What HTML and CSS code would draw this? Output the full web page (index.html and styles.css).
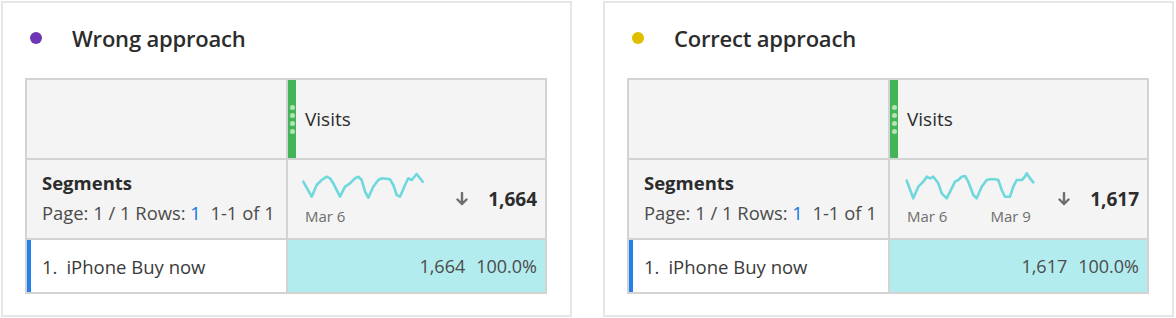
FILE: index.html
```html
<!DOCTYPE html>
<html>
<head>
<meta charset="utf-8">
<link rel="stylesheet" href="styles.css">
</head>
<body>
<div class="page">
  <section class="card">
    <div class="title-row">
      <span class="dot dot-purple"></span>
      <h2 class="title">Wrong approach</h2>
    </div>
    <div class="table">
      <div class="cell head-left"></div>
      <div class="cell head-right">
        <span class="grip"><i></i><i></i><i></i><i></i></span>
        <span class="metric">Visits</span>
      </div>
      <div class="cell seg-left">
        <div class="seg-title">Segments</div>
        <div class="seg-meta">Page: 1 / 1 Rows: <span class="blue">1</span>&nbsp; 1-1 of 1</div>
      </div>
      <div class="cell seg-right">
        <div class="spark">
          <svg width="126" height="32" viewBox="0 0 126 32">
            <polyline points="3.3,11.7 11.7,26.7 16.7,15 21.7,10 26.7,6.7 30,8.3 33.3,13.3 40,26.7 45,16.7 50,13.3 55,8.3 58.3,6.7 61.7,10 65,21.7 68.3,27.7 73.3,16.7 78.3,10 81.7,8.3 90,9.3 93.3,15 96.7,25 100,26.7 105,15 108.3,8.3 111.7,10 116.7,4 120,8.3 122.7,11.7"/>
          </svg>
          <div class="dates"><span>Mar 6</span></div>
        </div>
        <div class="total">
          <svg class="arrow" width="12" height="14" viewBox="0 0 12 14"><path d="M6 1 V12 M1.5 7.5 L6 12 L10.5 7.5"/></svg>
          <span class="num">1,664</span>
        </div>
      </div>
      <div class="cell row-left"><span class="idx">1.</span>iPhone Buy now</div>
      <div class="cell row-right"><span>1,664</span><span>100.0%</span></div>
    </div>
  </section>
  <section class="card">
    <div class="title-row">
      <span class="dot dot-yellow"></span>
      <h2 class="title">Correct approach</h2>
    </div>
    <div class="table">
      <div class="cell head-left"></div>
      <div class="cell head-right">
        <span class="grip"><i></i><i></i><i></i><i></i></span>
        <span class="metric">Visits</span>
      </div>
      <div class="cell seg-left">
        <div class="seg-title">Segments</div>
        <div class="seg-meta">Page: 1 / 1 Rows: <span class="blue">1</span>&nbsp; 1-1 of 1</div>
      </div>
      <div class="cell seg-right">
        <div class="spark">
          <svg width="136" height="32" viewBox="0 0 136 32">
            <polyline points="4.7,10.7 11.3,28.3 16.3,16.7 21.3,11.7 24.7,6.7 28,8.3 31.3,6.7 36.3,13.3 39.7,23.3 44.7,28.3 49.7,18.3 53,11.7 56.3,10 59.7,6.7 63,6 66.3,11.7 71.3,25 74.7,28.3 79.7,16.7 84.7,10 88,9.3 93,9.3 96.3,10 99.7,20 103,26.7 108,26.7 111.3,16.7 114.7,10 119.7,10 123,6.7 124.7,3.3 128,8.3 131.3,12.3"/>
          </svg>
          <div class="dates"><span>Mar 6</span><span>Mar 9</span></div>
        </div>
        <div class="total">
          <svg class="arrow" width="12" height="14" viewBox="0 0 12 14"><path d="M6 1 V12 M1.5 7.5 L6 12 L10.5 7.5"/></svg>
          <span class="num">1,617</span>
        </div>
      </div>
      <div class="cell row-left"><span class="idx">1.</span>iPhone Buy now</div>
      <div class="cell row-right"><span>1,617</span><span>100.0%</span></div>
    </div>
  </section>
</div>
</body>
</html>
```
FILE: styles.css
```css
* { box-sizing: border-box; }
html, body { margin: 0; background: #fff; }
body { font-family: "Open Sans", "Liberation Sans", sans-serif; color: #2c2c2c; }

.page {
  display: flex;
  gap: 31px;
  padding: 1px 0 0 1px;
}

.card {
  width: 571px;
  height: 316px;
  border: 2px solid #e6e6e6;
  padding: 0 23px 0 22px;
}

.title-row {
  display: flex;
  align-items: center;
  height: 70px;
  margin-bottom: 5px;
}
.dot {
  width: 12px;
  height: 12px;
  border-radius: 50%;
  margin-left: 5px;
  margin-right: 30px;
}
.dot-purple { background: #6e36b4; }
.dot-yellow { background: #dfbe00; }
.title {
  margin: 0;
  font-size: 22px;
  font-weight: 600;
  color: #2c2c2c;
  letter-spacing: -0.2px;
}

.table {
  display: grid;
  grid-template-columns: 261px 1fr;
  grid-template-rows: 80px 80px 52px;
  width: 522px;
  background: #d3d3d3;
  padding: 2px;
}

.cell { background: #f4f4f4; }
.head-left, .seg-left, .row-left { margin-right: 2px; }
.head-left, .head-right, .seg-left, .seg-right { margin-bottom: 2px; }

.head-right {
  display: flex;
  align-items: center;
}
.grip {
  width: 8px;
  align-self: stretch;
  background: #44b556;
  display: flex;
  flex-direction: column;
  align-items: center;
  justify-content: center;
  gap: 3px;
}
.grip i {
  display: block;
  width: 5px;
  height: 5px;
  border-radius: 50%;
  background: #b4e3ba;
}
.metric {
  margin-left: 9px;
  font-size: 19px;
  color: #2c2c2c;
}

.seg-left {
  padding: 11px 0 0 15px;
}
.seg-title {
  font-size: 18.5px;
  font-weight: 700;
  line-height: 24px;
  color: #2c2c2c;
  margin-bottom: 6px;
}
.seg-meta {
  font-size: 18.4px;
  line-height: 24px;
  color: #4b4b4b;
}
.blue { color: #1473e6; }

.seg-right {
  display: flex;
  align-items: center;
  padding-right: 8px;
}
.spark {
  align-self: flex-start;
  padding: 10px 0 0 12px;
}
.spark svg { display: block; }
.spark polyline {
  fill: none;
  stroke: #6fd8dc;
  stroke-width: 2.6;
  stroke-linejoin: round;
  stroke-linecap: round;
}
.dates {
  display: flex;
  gap: 43px;
  padding-left: 5px;
  margin-top: 4px;
  font-size: 15px;
  line-height: 20px;
  color: #6e6e6e;
}
.total {
  margin-left: auto;
  display: flex;
  align-items: center;
  gap: 20px;
}
.arrow path {
  fill: none;
  stroke: #6e6e6e;
  stroke-width: 2.4;
  stroke-linecap: round;
  stroke-linejoin: round;
}
.num {
  font-size: 19px;
  font-weight: 700;
  color: #2c2c2c;
}

.row-left {
  background: #fff;
  border-left: 4px solid #2680eb;
  display: flex;
  align-items: center;
  padding-left: 11px;
  font-size: 18.5px;
  color: #3a3a3a;
}
.idx { margin-right: 9px; }
.row-right {
  background: #b3ecee;
  display: flex;
  align-items: center;
  justify-content: flex-end;
  gap: 11px;
  padding-right: 8px;
  font-size: 18px;
  color: #4b4b4b;
}
```
